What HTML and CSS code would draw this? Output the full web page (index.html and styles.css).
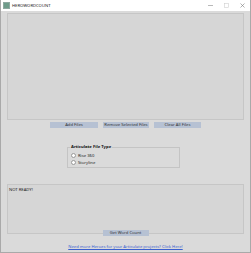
FILE: index.html
```html
<!DOCTYPE html>
<html lang="en">
<head>
    <meta charset="UTF-8">
    <title>HEROWORDCOUNT</title>
    <link rel="stylesheet" href="styles.css">
</head>
<body>
    <div class="window">
        <!-- タイトルバー -->
        <div class="titlebar">
            <span class="app-icon"></span>
            <span class="title">HEROWORDCOUNT</span>
            <span class="controls">
                <svg width="5" height="5" viewBox="0 0 5 5"><line x1="0" y1="2.5" x2="5" y2="2.5" stroke="#8a8a8a" stroke-width="0.6"/></svg>
                <svg width="5" height="5" viewBox="0 0 5 5"><rect x="0.5" y="0.5" width="4" height="4" fill="none" stroke="#cfcfcf" stroke-width="0.6"/></svg>
                <svg width="5" height="5" viewBox="0 0 5 5"><path d="M0.5 0.5 L4.5 4.5 M4.5 0.5 L0.5 4.5" stroke="#7a7a7a" stroke-width="0.6"/></svg>
            </span>
        </div>

        <div class="client">
            <div class="file-list"></div>

            <div class="button-row">
                <button class="btn btn-add">Add Files</button>
                <button class="btn btn-remove">Remove Selected Files</button>
                <button class="btn btn-clear">Clear All Files</button>
            </div>

            <fieldset class="group">
                <legend>Articulate File Type</legend>
                <label class="radio-row"><span class="radio"></span>Rise 360</label>
                <label class="radio-row"><span class="radio"></span>Storyline</label>
            </fieldset>

            <div class="status">NOT READY!</div>
            <button class="btn btn-count">Get Word Count</button>

            <a class="hero-link" href="#">Need more Heroes for your Articulate projects? Click Here!</a>
        </div>
    </div>
</body>
</html>
```

FILE: styles.css
```css
/* スタイル設定 */
body {
    margin: 0;
    padding: 0;
    font-family: "Noto Sans", "Open Sans", sans-serif;
    background-color: #ffffff;
}
.window {
    width: 251px;
    height: 253px;
    box-sizing: border-box;
    border: 1px solid #a9a9a9;
    border-top: none;
    background-color: #dadada;
    display: flex;
    flex-direction: column;
}
.titlebar {
    height: 11px;
    background-color: #fff;
    display: flex;
    align-items: center;
    padding-left: 2px;
}
.app-icon {
    width: 5px;
    height: 5px;
    background-color: #6f9c8a;
    border: 0.5px solid #8fa8a0;
}
.title {
    margin-left: 2px;
    font-size: 4.2px;
    color: #222;
}
.controls {
    margin-left: auto;
    display: flex;
    gap: 11px;
    padding-right: 5px;
}
.client {
    padding: 2px 6px 0 6px;
    display: flex;
    flex-direction: column;
}
.file-list {
    height: 107px;
    box-sizing: border-box;
    border: 1px solid #c6c6c6;
    background-color: #d6d6d6;
}
.button-row {
    display: flex;
    justify-content: center;
    gap: 5px;
    margin-top: 2px;
}
.btn {
    height: 6px;
    padding: 0;
    border: none;
    background-color: #b6c1d3;
    color: #333;
    font-family: inherit;
    font-size: 4.2px;
    line-height: 6px;
    white-space: nowrap;
}
.btn-add {
    width: 48px;
}
.btn-remove {
    width: 46px;
}
.btn-clear {
    width: 47px;
}
.group {
    width: 113px;
    box-sizing: border-box;
    margin: 16px 0 0 60px;
    padding: 2px 3px 1px 3px;
    border: 1px solid #c4c4c4;
}
.group legend {
    padding: 0 1px;
    margin-left: -1px;
    font-size: 4.2px;
    line-height: 6px;
    font-weight: bold;
    color: #111;
}
.radio-row {
    display: flex;
    align-items: center;
    height: 7px;
    font-size: 4.2px;
    color: #222;
}
.radio {
    width: 3px;
    height: 3px;
    border: 0.5px solid #999;
    border-radius: 50%;
    background-color: #fff;
    margin-right: 2px;
}
.status {
    height: 50px;
    box-sizing: border-box;
    margin-top: 16px;
    padding: 2px 1px;
    border: 1px solid #c6c6c6;
    background-color: #d6d6d6;
    font-size: 4.2px;
    line-height: 6px;
    color: #222;
}
.btn-count {
    width: 46px;
    align-self: center;
    margin-top: -4px;
}
.hero-link {
    margin-top: 8px;
    text-align: center;
    font-size: 4.2px;
    line-height: 6px;
    color: #3b5fd0;
    text-decoration: underline;
}
```
